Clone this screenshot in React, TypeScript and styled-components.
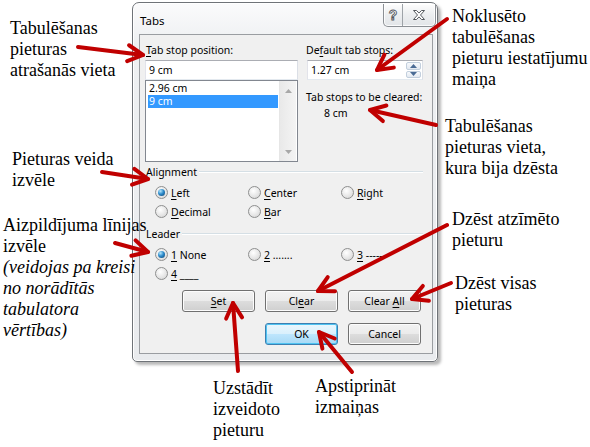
import React from "react";
import styled, { createGlobalStyle } from "styled-components";

const GlobalStyle = createGlobalStyle`
  html, body {
    margin: 0;
    padding: 0;
    background: #fff;
  }
  body {
    width: 590px;
    height: 447px;
    overflow: hidden;
  }
`;

const RED = "#c00000";

const Canvas = styled.div`
  position: relative;
  width: 590px;
  height: 447px;
  box-sizing: border-box;
  padding: 2px 0 0 132px;
  overflow: hidden;
  color: #000;
`;

/* ---------- dialog window ---------- */

const Window = styled.div`
  width: 306px;
  height: 360px;
  box-sizing: border-box;
  display: flex;
  flex-direction: column;
  padding: 0 4px 7px 6px;
  border: 1px solid #6f7378;
  border-radius: 7px 7px 5px 5px;
  background: linear-gradient(#fbfbfc, #eef0f2 40px, #e9ebee);
  box-shadow: inset 0 0 0 1px #fff, 3px 3px 3px rgba(0, 0, 0, 0.28);
  font-family: "Noto Sans", sans-serif;
  font-size: 10.5px;
`;

const TitleBar = styled.div`
  height: 31px;
  display: flex;
  justify-content: space-between;
  align-items: flex-start;
`;

const Title = styled.span`
  margin: 11px 0 0 1px;
  font-size: 11.5px;
  line-height: 14px;
`;

const CaptionButtons = styled.div`
  display: flex;
  margin: 1px -3px 0 0;
  height: 22px;
  border: 1px solid #8c9095;
  border-top: none;
  border-radius: 0 0 5px 5px;
  overflow: hidden;
  background: linear-gradient(#fdfdfd, #eceef0 50%, #e2e5e8);
  box-shadow: inset 0 0 0 1px rgba(255, 255, 255, 0.8);
`;

const CaptionButton = styled.div<{ $w: number }>`
  width: ${(p) => p.$w}px;
  height: 100%;
  display: flex;
  align-items: center;
  justify-content: center;
  & + & {
    border-left: 1px solid #9ea3a8;
  }
`;

const Client = styled.div`
  flex: 1;
  border: 1px solid #9a9da1;
  background: #f0f0f0;
  padding: 8px 9px 0 5px;
  display: flex;
  flex-direction: column;
`;

/* ---------- top area ---------- */

const TopGrid = styled.div`
  display: grid;
  grid-template-columns: 153px 117px;
  column-gap: 8px;
`;

const Column = styled.div`
  display: flex;
  flex-direction: column;
`;

const Label = styled.div<{ $indent?: number; $top?: number }>`
  height: 15px;
  line-height: 15px;
  margin-left: ${(p) => p.$indent ?? 1}px;
  margin-top: ${(p) => p.$top ?? 0}px;
  margin-bottom: 2px;
  white-space: nowrap;
`;

const TextBox = styled.div<{ $left?: number }>`
  height: 20px;
  box-sizing: border-box;
  margin-left: ${(p) => p.$left ?? 0}px;
  border: 1px solid #abadb3;
  border-left-color: #e2e3ea;
  border-right-color: #dbdfe6;
  border-bottom-color: #e3e9ef;
  background: #fff;
  display: flex;
  align-items: center;
  padding-left: 3px;
`;

const Spin = styled.div`
  margin-left: auto;
  margin-right: 1px;
  width: 15px;
  height: 16px;
  display: flex;
  flex-direction: column;
  gap: 1px;
`;

const SpinHalf = styled.div`
  flex: 1;
  border: 1px solid #c2cfdd;
  border-radius: 2px;
  background: linear-gradient(#f7f9fc, #e3e9f1);
  display: flex;
  align-items: center;
  justify-content: center;
`;

const ListBox = styled.div`
  height: 82px;
  box-sizing: border-box;
  border: 1px solid #828790;
  background: #fff;
  display: flex;
`;

const ListItems = styled.div`
  flex: 1;
  padding: 1px 1px 0 2px;
`;

const ListItem = styled.div<{ $selected?: boolean }>`
  height: 13px;
  line-height: 13px;
  padding-left: 1px;
  background: ${(p) => (p.$selected ? "#3399ff" : "transparent")};
  color: ${(p) => (p.$selected ? "#fff" : "#000")};
`;

const ScrollBar = styled.div`
  width: 16px;
  margin-right: 1px;
  border-left: 1px solid #e6e6e6;
  background: linear-gradient(90deg, #e9e9e9, #f4f4f4);
  display: flex;
  flex-direction: column;
  justify-content: space-between;
  align-items: center;
  padding: 8px 0 7px;
`;

/* ---------- groups ---------- */

const GroupHeader = styled.div<{ $top: number }>`
  display: flex;
  align-items: center;
  gap: 2px;
  height: 15px;
  margin-top: ${(p) => p.$top}px;
  padding-left: 1px;
  &::after {
    content: "";
    flex: 1;
    height: 1px;
    background: #d5dfe5;
    border-bottom: 1px solid #fff;
  }
`;

const RadioGrid = styled.div`
  display: grid;
  grid-template-columns: repeat(3, 93px);
  grid-auto-rows: 19px;
  margin-top: 4px;
  padding-left: 10px;
`;

const RadioItem = styled.div`
  display: flex;
  align-items: center;
  gap: 3px;
  white-space: pre;
`;

const RadioCircle = styled.span<{ $on?: boolean }>`
  width: 13px;
  height: 13px;
  box-sizing: border-box;
  border-radius: 50%;
  border: 1px solid #8e8f8f;
  background: radial-gradient(circle at 40% 35%, #ffffff, #e4e4e4 60%, #cfcfcf);
  display: flex;
  align-items: center;
  justify-content: center;
  &::after {
    content: "";
    display: ${(p) => (p.$on ? "block" : "none")};
    width: 7px;
    height: 7px;
    border-radius: 50%;
    background: radial-gradient(circle at 35% 30%, #b6e6fb, #2d8ccc 45%, #0b3d6b);
  }
`;

const Key = styled.span`
  text-decoration: underline;
  text-underline-offset: 2px;
`;

/* ---------- buttons ---------- */

const ButtonGrid = styled.div`
  display: grid;
  grid-template-columns: repeat(3, 73px);
  grid-auto-rows: 22px;
  column-gap: 10px;
  row-gap: 11px;
  margin: 7px 0 0 37px;
`;

const Button = styled.div<{ $col?: number; $default?: boolean }>`
  grid-column: ${(p) => p.$col ?? "auto"};
  box-sizing: border-box;
  border: 1px solid ${(p) => (p.$default ? "#3c7fb1" : "#707070")};
  border-radius: 3px;
  background: ${(p) =>
    p.$default
      ? "linear-gradient(#eaf6fd, #d9f0fc 50%, #bee6fd 50%, #a7d9f5)"
      : "linear-gradient(#f2f2f2, #ebebeb 50%, #dddddd 50%, #cfcfcf)"};
  box-shadow: inset 0 0 0 1px ${(p) => (p.$default ? "#4fc3f1" : "#fcfcfc")};
  text-align: center;
  line-height: 20px;
  white-space: pre;
`;

/* ---------- callouts (annotations placed on the picture) ---------- */

const Callout = styled.div<{ $x: number; $y: number }>`
  position: absolute;
  left: ${(p) => p.$x}px;
  top: ${(p) => p.$y}px;
  font-family: "Liberation Serif", serif;
  font-size: 18px;
  line-height: 21px;
  color: #000;
  white-space: nowrap;
`;

const Note = styled.span`
  font-style: italic;
`;

const ArrowLayer = styled.svg`
  position: absolute;
  left: 0;
  top: 0;
  pointer-events: none;
`;

type Arrow = [number, number, number, number];

const arrows: Arrow[] = [
  [78, 47, 143, 55],
  [102, 172, 148, 179],
  [115, 243, 148, 252],
  [447, 19, 377, 70],
  [436, 125, 370, 110],
  [447, 225, 318, 291],
  [451, 283, 412, 299],
  [238, 371, 233, 303],
  [352, 372, 319, 332],
];

const head = ([x1, y1, x2, y2]: Arrow) => {
  const len = Math.hypot(x2 - x1, y2 - y1);
  const dx = (x2 - x1) / len;
  const dy = (y2 - y1) / len;
  const a = (28 * Math.PI) / 180;
  const L = 17;
  const wing = (s: number) => {
    const c = Math.cos(s * a);
    const n = Math.sin(s * a);
    const rx = dx * c - dy * n;
    const ry = dx * n + dy * c;
    return `${x2 - rx * L},${y2 - ry * L}`;
  };
  return `${wing(1)} ${x2},${y2} ${wing(-1)}`;
};

const QuestionIcon = () => (
  <svg width="12" height="14" viewBox="0 0 12 14">
    <text
      x="6"
      y="12"
      textAnchor="middle"
      fontFamily="'Liberation Sans', sans-serif"
      fontWeight="700"
      fontSize="14"
      fill="#fff"
      stroke="#55595e"
      strokeWidth="0.9"
    >
      ?
    </text>
  </svg>
);

const CloseIcon = () => (
  <svg width="14" height="12" viewBox="0 0 14 12">
    <path
      d="M1.5 1.5h3l2.5 2.6 2.5-2.6h3l-4 4.5 4 4.5h-3L7 7.9l-2.5 2.6h-3l4-4.5z"
      fill="#fff"
      stroke="#55595e"
      strokeWidth="1"
      strokeLinejoin="round"
    />
  </svg>
);

const Triangle = ({ up, color }: { up?: boolean; color: string }) => (
  <svg width="7" height="4" viewBox="0 0 7 4">
    <path d={up ? "M0 4L3.5 0L7 4z" : "M0 0L3.5 4L7 0z"} fill={color} />
  </svg>
);

const Radio = ({ on, children }: { on?: boolean; children: React.ReactNode }) => (
  <RadioItem>
    <RadioCircle $on={on} />
    <span>{children}</span>
  </RadioItem>
);

export default function App() {
  return (
    <>
      <GlobalStyle />
      <Canvas>
        <Window>
          <TitleBar>
            <Title>Tabs</Title>
            <CaptionButtons>
              <CaptionButton $w={18}>
                <QuestionIcon />
              </CaptionButton>
              <CaptionButton $w={32}>
                <CloseIcon />
              </CaptionButton>
            </CaptionButtons>
          </TitleBar>
          <Client>
            <TopGrid>
              <Column>
                <Label>
                  <Key>T</Key>ab stop position:
                </Label>
                <TextBox>9 cm</TextBox>
                <ListBox>
                  <ListItems>
                    <ListItem>2.96 cm</ListItem>
                    <ListItem $selected>9 cm</ListItem>
                  </ListItems>
                  <ScrollBar>
                    <Triangle up color="#a8a8a8" />
                    <Triangle color="#a8a8a8" />
                  </ScrollBar>
                </ListBox>
              </Column>
              <Column>
                <Label $indent={0}>
                  De<Key>f</Key>ault tab stops:
                </Label>
                <TextBox $left={1}>
                  <span>1.27 cm</span>
                  <Spin>
                    <SpinHalf>
                      <Triangle up color="#4a6b95" />
                    </SpinHalf>
                    <SpinHalf>
                      <Triangle color="#4a6b95" />
                    </SpinHalf>
                  </Spin>
                </TextBox>
                <Label $indent={0} $top={10}>
                  Tab stops to be cleared:
                </Label>
                <Label $indent={18} $top={-1}>
                  8 cm
                </Label>
              </Column>
            </TopGrid>

            <GroupHeader $top={2}>Alignment</GroupHeader>
            <RadioGrid>
              <Radio on>
                <Key>L</Key>eft
              </Radio>
              <Radio>
                <Key>C</Key>enter
              </Radio>
              <Radio>
                <Key>R</Key>ight
              </Radio>
              <Radio>
                <Key>D</Key>ecimal
              </Radio>
              <Radio>
                <Key>B</Key>ar
              </Radio>
            </RadioGrid>

            <GroupHeader $top={5}>Leader</GroupHeader>
            <RadioGrid>
              <Radio on>
                <Key>1</Key> None
              </Radio>
              <Radio>
                <Key>2</Key> .......
              </Radio>
              <Radio>
                <Key>3</Key> -----
              </Radio>
              <Radio>
                <Key>4</Key> ____
              </Radio>
            </RadioGrid>

            <ButtonGrid>
              <Button>
                <Key>S</Key>et
              </Button>
              <Button>
                Cl<Key>e</Key>ar
              </Button>
              <Button>
                {"Clear "}
                <Key>A</Key>ll
              </Button>
              <Button $col={2} $default>
                OK
              </Button>
              <Button $col={3}>Cancel</Button>
            </ButtonGrid>
          </Client>
        </Window>

        <Callout $x={10} $y={18}>
          Tabulēšanas
          <br />
          pieturas
          <br />
          atrašanās vieta
        </Callout>
        <Callout $x={12} $y={149}>
          Pieturas veida
          <br />
          izvēle
        </Callout>
        <Callout $x={3} $y={215}>
          Aizpildījuma līnijas
          <br />
          izvēle
          <br />
          <Note>
            (veidojas pa kreisi
            <br />
            no norādītās
            <br />
            tabulatora
            <br />
            vērtības)
          </Note>
        </Callout>
        <Callout $x={452} $y={6}>
          Noklusēto
          <br />
          tabulēšanas
          <br />
          pieturu iestatījumu
          <br />
          maiņa
        </Callout>
        <Callout $x={445} $y={116}>
          Tabulēšanas
          <br />
          pieturas vieta,
          <br />
          kura bija dzēsta
        </Callout>
        <Callout $x={452} $y={209}>
          Dzēst atzīmēto
          <br />
          pieturu
        </Callout>
        <Callout $x={455} $y={273}>
          Dzēst visas
          <br />
          pieturas
        </Callout>
        <Callout $x={213} $y={378}>
          Uzstādīt
          <br />
          izveidoto
          <br />
          pieturu
        </Callout>
        <Callout $x={315} $y={376}>
          Apstiprināt
          <br />
          izmaiņas
        </Callout>

        <ArrowLayer width="590" height="447" viewBox="0 0 590 447">
          {arrows.map((a, i) => (
            <g key={i} stroke={RED} strokeWidth="4" fill="none" strokeLinecap="round" strokeLinejoin="round">
              <line x1={a[0]} y1={a[1]} x2={a[2]} y2={a[3]} />
              <polyline points={head(a)} />
            </g>
          ))}
        </ArrowLayer>
      </Canvas>
    </>
  );
}
